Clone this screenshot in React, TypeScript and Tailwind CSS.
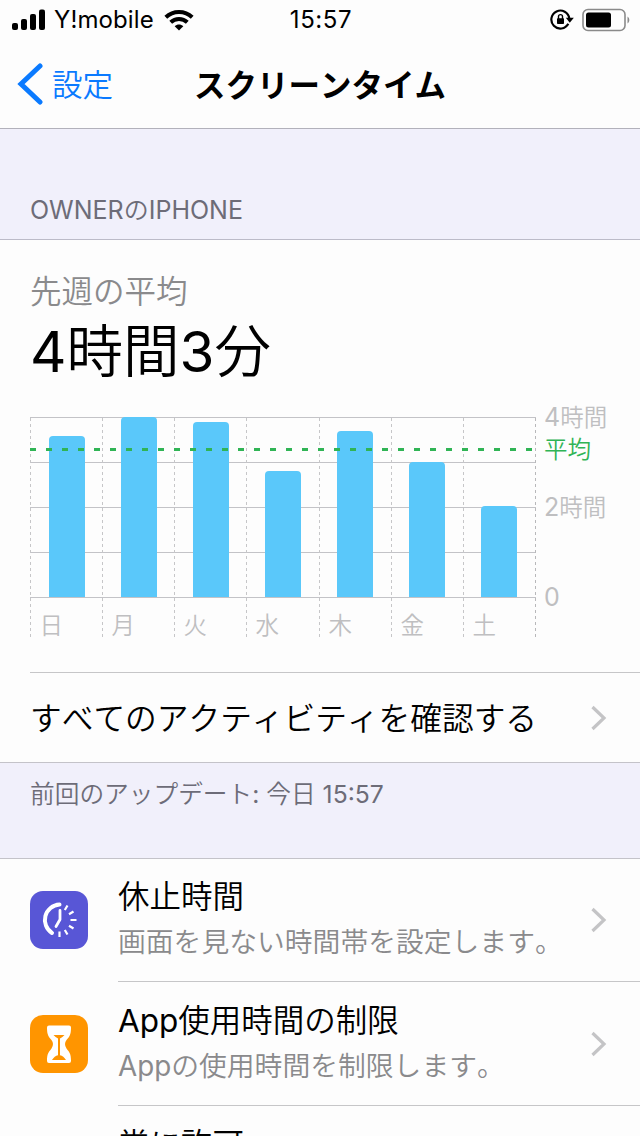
import type { ReactNode } from "react";

const FONT = "font-['Inter','Noto_Sans_CJK_JP',sans-serif] [font-kerning:none]";

const days = [
  { label: "日", line: 0.5, bar: 19, top: 19 },
  { label: "月", line: 72.5, bar: 91, top: 0 },
  { label: "火", line: 144.5, bar: 163, top: 5 },
  { label: "水", line: 216.5, bar: 235, top: 54 },
  { label: "木", line: 289.5, bar: 307, top: 14 },
  { label: "金", line: 361.5, bar: 379, top: 45 },
  { label: "土", line: 433.5, bar: 451, top: 89 },
];

const BASELINE = 180;

const StatusBar = () => (
  <div className="flex h-10 items-center justify-between pl-3 pr-2.5">
    <div className="flex w-[240px] items-center">
      <svg width="34" height="22" viewBox="0 0 34 22">
        <rect x="0" y="14" width="6" height="7" rx="2" />
        <rect x="9" y="10" width="6" height="11" rx="2" />
        <rect x="18" y="5" width="6" height="16" rx="2" />
        <rect x="27" y="0.5" width="6" height="20.5" rx="2" />
      </svg>
      <span className="ml-2 text-[24px] leading-10 tracking-[0.1px]">Y!mobile</span>
      <svg className="ml-2.5" width="30" height="22" viewBox="0 0 30 22" fill="none" stroke="#000" strokeWidth="4">
        <path d="M1.8 8.2C9.2 1.1 20.8 1.1 28.2 8.2" />
        <path d="M6.7 13.3c4.6-4.4 12-4.4 16.6 0" />
        <path d="M15 21.5l-4.3-4.3c2.4-2.2 6.2-2.2 8.6 0z" fill="#000" stroke="none" />
      </svg>
    </div>
    <span className="text-[24px] leading-10 tracking-[0.6px]">15:57</span>
    <div className="flex w-[240px] items-center justify-end gap-2">
      <svg width="24" height="24" viewBox="0 0 24 24" fill="none" stroke="#000" strokeWidth="2.2">
        <path d="M18.3 15.800A9 9 0 1 1 19.3 10.500" />
        <path d="M15.800 9.800h8l-4 5z" fill="#000" stroke="none" />
        <rect x="7" y="10.300" width="7" height="5.700" rx="0.800" fill="#000" stroke="none" />
        <path d="M8.500 11V8.600a2 2 0 0 1 4 0V11" strokeWidth="1.400" />
      </svg>
      <svg width="48" height="24" viewBox="0 0 48 24">
        <rect x="1" y="1.5" width="42" height="21" rx="5" fill="none" stroke="#8a8a8a" strokeWidth="1.6" />
        <rect x="4" y="4.5" width="25" height="15" rx="2.5" />
        <path d="M45.5 8.5c2.4 1.5 2.4 5.500 0 7z" fill="#8a8a8a" />
      </svg>
    </div>
  </div>
);

const NavBar = () => (
  <header className="grid h-[89px] grid-cols-[1fr_auto_1fr] items-center border-b border-[#b2b1bb]">
    <a className="flex items-center pl-[17px] text-[#0a7aff]">
      <svg width="26" height="44" viewBox="0 0 26 44" fill="none" stroke="currentColor" strokeWidth="5" strokeLinecap="round" strokeLinejoin="miter">
        <path d="M23 4L4 22l19 18" />
      </svg>
      <span className="ml-[9px] pt-0.5 text-[30.500px] leading-10 font-[350]">設定</span>
    </a>
    <h1 className="pt-1 text-center text-[31.500px] leading-10 font-bold whitespace-nowrap">スクリーンタイム</h1>
  </header>
);

const UsageChart = () => (
  <svg className="block overflow-visible" width="610" height="240" viewBox="0 -10 610 240">
    {[0.5, 45.5, 90.5, 135.5, 180.5].map((y) => (
      <path key={y} d={`M0 ${y}H506`} stroke="#c3c3c7" />
    ))}
    {days.map((d) => (
      <path key={d.label} d={`M${d.line} 1V220`} stroke="#c6c6c8" strokeDasharray="3 3" />
    ))}
    <path d="M505.5 1V220" stroke="#b8b8ba" strokeDasharray="3 3" />
    {days.map((d) => (
      <path
        key={d.label}
        fill="#5ac8fa"
        d={`M${d.bar} ${BASELINE}V${d.top + 4}q0 -4 4 -4h28q4 0 4 4V${BASELINE}z`}
      />
    ))}
    <path d="M0 32.500H506" stroke="#30b455" strokeWidth="3" strokeDasharray="6 10" />
    <g fill="#bfbfc1" fontSize="23.500" fontWeight="350">
      {days.map((d) => (
        <text key={d.label} x={d.line + 9} y="217">
          {d.label}
        </text>
      ))}
      <text x="514" y="9">
        <tspan fontWeight="400" fontSize="25">4</tspan>時間
      </text>
      <text x="514" y="99">
        <tspan fontWeight="400" fontSize="25">2</tspan>時間
      </text>
      <text x="514" y="189" fontWeight="400" fontSize="25">0</text>
      <text x="514" y="41" fill="#30b455">平均</text>
    </g>
  </svg>
);

// Latin runs are set a step heavier so they keep pace with the kanji strokes
const Mixed = ({ text }: { text: string }) => (
  <>
    {text.split(/([\x20-\x7e]+)/).map((part, i) =>
      i % 2 ? (
        <span key={i} className="font-normal">
          {part}
        </span>
      ) : (
        part
      )
    )}
  </>
);

const Chevron = () => (
  <svg className="shrink-0" width="16" height="26" viewBox="0 0 16 26" fill="none" stroke="#c4c4c6" strokeWidth="3.2">
    <path d="M1.500 2L13 13 1.500 24" />
  </svg>
);

const DowntimeIcon = () => (
  <svg width="58" height="58" viewBox="0 0 58 58" fill="none" stroke="#fff">
    <path d="M29.500 13.500A15.500 15.500 0 0 0 22 42" strokeWidth="4" strokeLinecap="round" />
    <path d="M30 19.500v9l-4 7" strokeWidth="2.800" strokeLinecap="round" strokeLinejoin="round" />
    <path
      d="M37.500 14.500l-2.700 4.500M43.500 20.500l-4.500 2.700M46.500 29h-6M43.500 37.500l-4.500-2.700M37.500 43.500l-2.700-4.500M29.500 46v-5.500"
      strokeWidth="2.200"
    />
  </svg>
);

const HourglassIcon = () => (
  <svg width="58" height="58" viewBox="0 0 58 58">
    <path
      d="M19 10.500h20q2 0 2 2c0 7.500-1.500 9-4.500 12.500q-3 4 0 8.500c3 4 4.500 5 4.500 12.500q0 2-2 2H19q-2 0-2-2c0-7.500 1.500-8.500 4.500-12.500q3-4.500 0-8.500C18.500 21.500 17 20 17 12.500q0-2 2-2z"
      fill="#fff"
    />
    <path d="M23.500 20h11q-2.500 2.800-4.500 3.500v16.800q3.500.7 6 4.700H22q2.500-4 6-4.700V23.500q-2-.7-4.500-3.500z" fill="#ff9500" />
  </svg>
);

type RowProps = {
  icon?: ReactNode;
  color: string;
  title: string;
  description?: string;
};

const SettingRow = ({ icon, color, title, description = "" }: RowProps) => (
  <li className="flex h-[124px] pl-[30px]">
    <div className={`mt-[33px] h-[58px] w-[58px] shrink-0 overflow-hidden rounded-[13px] ${color}`}>{icon}</div>
    <div className="ml-[30px] flex flex-1 items-center justify-between border-b border-[#c6c6c8] pr-[33px]">
      <div className="self-start pt-4 whitespace-nowrap">
        <p className="text-[31.500px] leading-[46px] font-[350]">
          <Mixed text={title} />
        </p>
        <p className="text-[27.800px] leading-[44px] font-[350] text-[#8a8a8c]">
          <Mixed text={description} />
        </p>
      </div>
      <Chevron />
    </div>
  </li>
);

const App = () => (
  <div lang="ja" className={`h-[1136px] w-[640px] overflow-hidden bg-[#fdfdfd] text-black ${FONT}`}>
    <StatusBar />
    <NavBar />

    <div className="flex h-[111px] items-end border-b border-[#bcbbc8] bg-[#f1f0fb] pb-[11px] pl-[30px]">
      <h2 className="text-[25px] leading-9 font-[350] text-[#6d6c78]">
        <Mixed text="OWNERのIPHONE" />
      </h2>
    </div>

    <section className="h-[432px] pt-[31px] pl-[30px]">
      <p className="pt-px text-[31.500px] leading-10 font-[350] text-[#8a8a8c]">先週の平均</p>
      <p className="mb-[15px] text-[56.500px] leading-[80px] font-[350]">
        <Mixed text="4時間3分" />
      </p>
      <UsageChart />
    </section>

    <a className="ml-[30px] flex h-[90px] items-center justify-between border-t border-[#c6c6c8] pr-[33px]">
      <span className="pt-[3px] text-[31.700px] font-[350]">すべてのアクティビティを確認する</span>
      <Chevron />
    </a>

    <div className="h-[97px] border-y border-[#c4c3c9] bg-[#f1f0fb] pt-[13px] pl-[30px]">
      <p className="text-[24.700px] leading-9 font-[350] text-[#6d6c78]">
        <Mixed text="前回のアップデート: 今日 15:57" />
      </p>
    </div>

    <ul className="-mt-px">
      <SettingRow
        icon={<DowntimeIcon />}
        color="bg-[#5856d6]"
        title="休止時間"
        description="画面を見ない時間帯を設定します。"
      />
      <SettingRow
        icon={<HourglassIcon />}
        color="bg-[#ff9500]"
        title="App使用時間の制限"
        description="Appの使用時間を制限します。"
      />
      <SettingRow color="bg-[#34c759]" title="常に許可" />
    </ul>
  </div>
);

export default App;
